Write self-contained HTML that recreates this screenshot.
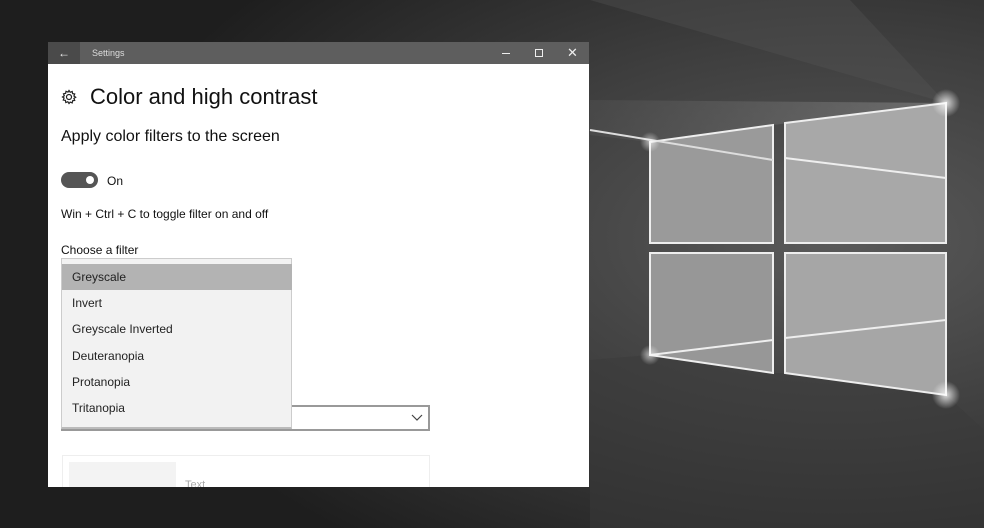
<!DOCTYPE html>
<html><head><meta charset="utf-8"><style>
*{margin:0;padding:0;box-sizing:border-box}
body{width:984px;height:528px;overflow:hidden;position:relative;font-family:"Liberation Sans",sans-serif;background:#2a2a2a}
.abs{position:absolute}
.win{left:48px;top:42px;width:541px;height:445px;background:#fff;overflow:hidden}
.tb{left:0;top:0;width:541px;height:22px;background:#5e5e5e}
.back{left:0;top:0;width:32px;height:22px;background:#4a4a4a;color:#eee;font-size:12px;text-align:center;line-height:22px}
.t{color:#111;white-space:nowrap}
.row{position:absolute;left:0;width:230px;height:26px;line-height:26px;padding-left:10px;font-size:12px;color:#222}
</style></head><body>
<svg class="abs" style="left:0;top:0" width="984" height="528">
<defs>
<radialGradient id="g1" cx="0.85" cy="0.45" r="0.75"><stop offset="0" stop-color="#5a5a5a"/><stop offset="0.5" stop-color="#3e3e3e"/><stop offset="1" stop-color="#1e1e1e"/></radialGradient>
<linearGradient id="b1" x1="0" y1="0" x2="1" y2="0"><stop offset="0" stop-color="#666" stop-opacity="0.2"/><stop offset="1" stop-color="#888" stop-opacity="0.6"/></linearGradient>
<radialGradient id="gl"><stop offset="0" stop-color="#fff"/><stop offset="1" stop-color="#fff" stop-opacity="0"/></radialGradient>
</defs>
<rect width="984" height="528" fill="url(#g1)"/>
<polygon points="590,100 946,103 773,125 650,142 590,135" fill="url(#b1)"/>
<polygon points="590,0 850,0 946,103" fill="#555" opacity="0.35"/>
<polygon points="590,360 650,355 773,373 785,373 946,395 984,430 984,528 590,528" fill="#3a3a3a" opacity="0.5"/>
<polygon points="650,142 773,125 773,243 650,243" fill="#9a9a9a" stroke="#eee" stroke-width="2"/>
<polygon points="785,123 946,103 946,243 785,243" fill="#a8a8a8" stroke="#eee" stroke-width="2"/>
<polygon points="650,253 773,253 773,373 650,355" fill="#979797" stroke="#eee" stroke-width="2"/>
<polygon points="785,253 946,253 946,395 785,373" fill="#a6a6a6" stroke="#eee" stroke-width="2"/>
<line x1="590" y1="130" x2="773" y2="160" stroke="#ddd" stroke-width="2"/>
<line x1="785" y1="158" x2="946" y2="178" stroke="#eee" stroke-width="2"/>
<line x1="785" y1="338" x2="946" y2="320" stroke="#eee" stroke-width="2"/>
<line x1="650" y1="355" x2="773" y2="340" stroke="#eee" stroke-width="2"/>
<circle cx="946" cy="103" r="14" fill="url(#gl)" opacity="0.8"/>
<circle cx="946" cy="395" r="14" fill="url(#gl)" opacity="0.8"/>
<circle cx="650" cy="355" r="10" fill="url(#gl)" opacity="0.6"/>
<circle cx="650" cy="142" r="10" fill="url(#gl)" opacity="0.6"/>
</svg>
<div class="abs win">
 <div class="abs tb"></div>
 <div class="abs back">←</div>
 <div class="abs t" style="left:44px;top:6px;font-size:9px;color:#ddd">Settings</div>
 <div class="abs" style="left:454px;top:11px;width:8px;height:1px;background:#eee"></div>
 <div class="abs" style="left:487px;top:7px;width:8px;height:8px;border:1px solid #eee"></div>
 <div class="abs t" style="left:519px;top:3px;font-size:13px;color:#eee">✕</div>
 <svg class="abs" style="left:13px;top:47px" width="16" height="16" viewBox="0 0 16 16"><g fill="none" stroke="#222" stroke-width="1.2"><circle cx="8" cy="8" r="2.5"/><path d="M8 1.5l1.2 1.8 2-.8.4 2.1 2.1.4-.8 2 1.8 1.2-1.8 1.2.8 2-2.1.4-.4 2.1-2-.8L8 14.5l-1.2-1.8-2 .8-.4-2.1-2.1-.4.8-2L1.5 8l1.8-1.2-.8-2 2.1-.4.4-2.1 2 .8z"/></g></svg>
 <div class="abs t" style="left:42px;top:42px;font-size:22px">Color and high contrast</div>
 <div class="abs t" style="left:13px;top:86px;font-size:16px">Apply color filters to the screen</div>
 <div class="abs" style="left:13px;top:130px;width:37px;height:16px;border-radius:8px;background:#555"></div>
 <div class="abs" style="left:38px;top:134px;width:8px;height:8px;border-radius:4px;background:#fff"></div>
 <div class="abs t" style="left:59px;top:132px;font-size:12px">On</div>
 <div class="abs t" style="left:13px;top:165px;font-size:12px">Win + Ctrl + C to toggle filter on and off</div>
 <div class="abs t" style="left:13px;top:201px;font-size:12px">Choose a filter</div>
 <div class="abs" style="left:13px;top:363px;width:369px;height:26px;border:2px solid #999;background:#fff"></div>
 <svg class="abs" style="left:363px;top:370px" width="12" height="10"><path d="M1 3l5 5 5-5" fill="none" stroke="#444" stroke-width="1.2"/></svg>
 <div class="abs" style="left:13px;top:216px;width:231px;height:171px;background:#f2f2f2;border:1px solid #ccc;border-bottom:2px solid #bbb">
  <div class="row" style="top:5px;background:#b3b3b3">Greyscale</div>
  <div class="row" style="top:31px">Invert</div>
  <div class="row" style="top:57px">Greyscale Inverted</div>
  <div class="row" style="top:84px">Deuteranopia</div>
  <div class="row" style="top:110px">Protanopia</div>
  <div class="row" style="top:136px">Tritanopia</div>
 </div>
 <div class="abs" style="left:14px;top:413px;width:368px;height:40px;border:1px solid #eee"></div>
 <div class="abs" style="left:21px;top:420px;width:107px;height:30px;background:#f3f3f3"></div>
 <div class="abs t" style="left:137px;top:437px;font-size:11px;color:#aaa">Text</div>
</div>
</body></html>
